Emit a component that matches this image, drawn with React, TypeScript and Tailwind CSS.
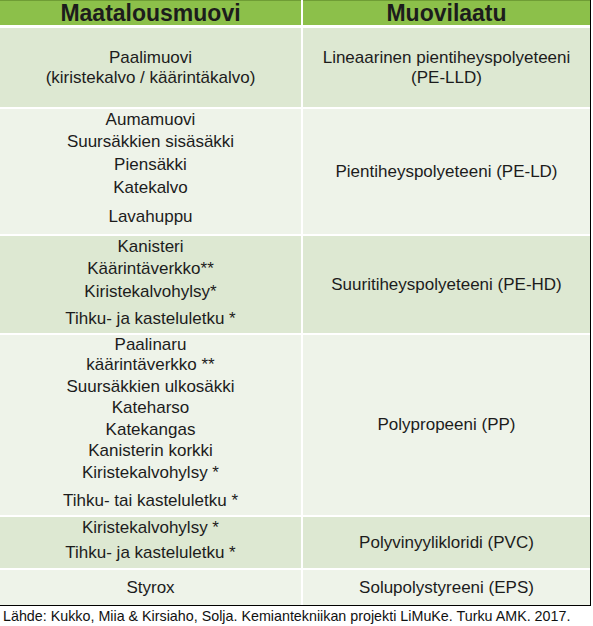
const font = { fontFamily: '"Liberation Sans", Arial, sans-serif' };

type Line = { text: string; cls?: string };

const Cell = ({ lines, cls }: { lines: Line[]; cls: string }) => (
  <div className={`flex flex-col items-center text-center ${cls}`}>
    {lines.map((l, i) => (
      <div key={i} className={l.cls ?? "leading-[22px]"}>
        {l.text}
      </div>
    ))}
  </div>
);

const App = () => {
  return (
    <div className="w-[593px] h-[626px] bg-white text-[#1c1c1c]" style={font}>
      <div className="w-[591px] border-r border-b border-black bg-white">
        <div className="grid grid-cols-[301px_287px] gap-x-[2px] gap-y-[2px]">
          {/* header */}
          <div className="h-[25px] bg-[#8cc04a] border-t border-[#6f9d35] flex items-center justify-center text-[23px] font-bold leading-none">
            Maatalousmuovi
          </div>
          <div className="h-[25px] bg-[#8cc04a] border-t border-[#6f9d35] flex items-center justify-center text-[23px] font-bold leading-none">
            Muovilaatu
          </div>

          {/* Paalimuovi */}
          <div className="h-[79px] bg-[#dde8d2] mt-[1px] flex flex-col items-center justify-center text-[17px] leading-[20px]">
            <div>Paalimuovi</div>
            <div>(kiristekalvo / käärintäkalvo)</div>
          </div>
          <div className="h-[79px] bg-[#dde8d2] mt-[1px] flex flex-col items-center justify-center text-[17px] leading-[20px]">
            <div>Lineaarinen pientiheyspolyeteeni</div>
            <div>(PE-LLD)</div>
          </div>

          {/* PE-LD */}
          <Cell
            cls="h-[125px] bg-[#eef3e9] text-[17px]"
            lines={[
              { text: "Aumamuovi", cls: "leading-[22px]" },
              { text: "Suursäkkien sisäsäkki", cls: "leading-[22px]" },
              { text: "Piensäkki", cls: "leading-[23px]" },
              { text: "Katekalvo", cls: "leading-[23px]" },
              { text: "Lavahuppu", cls: "leading-[23px] mt-[6px]" },
            ]}
          />
          <div className="h-[125px] bg-[#eef3e9] flex items-center justify-center text-[17px]">
            Pientiheyspolyeteeni (PE-LD)
          </div>

          {/* PE-HD */}
          <Cell
            cls="h-[97px] bg-[#dde8d2] text-[17px]"
            lines={[
              { text: "Kanisteri", cls: "leading-[21px]" },
              { text: "Käärintäverkko**", cls: "leading-[23px]" },
              { text: "Kiristekalvohylsy*", cls: "leading-[23px]" },
              { text: "Tihku- ja kasteluletku *", cls: "leading-[23px] mt-[4px]" },
            ]}
          />
          <div className="h-[97px] bg-[#dde8d2] flex items-center justify-center text-[17px]">
            Suuritiheyspolyeteeni (PE-HD)
          </div>

          {/* PP */}
          <Cell
            cls="h-[180px] bg-[#eef3e9] text-[17px]"
            lines={[
              { text: "Paalinaru", cls: "leading-[19px]" },
              { text: "käärintäverkko **", cls: "leading-[21.5px]" },
              { text: "Suursäkkien ulkosäkki", cls: "leading-[21.5px]" },
              { text: "Kateharso", cls: "leading-[21.5px]" },
              { text: "Katekangas", cls: "leading-[21.5px]" },
              { text: "Kanisterin korkki", cls: "leading-[21.5px]" },
              { text: "Kiristekalvohylsy *", cls: "leading-[21.5px]" },
              { text: "Tihku- tai kasteluletku *", cls: "leading-[21.5px] mt-[7px]" },
            ]}
          />
          <div className="h-[180px] bg-[#eef3e9] flex items-center justify-center text-[17px]">
            Polypropeeni (PP)
          </div>

          {/* PVC */}
          <Cell
            cls="h-[51px] bg-[#dde8d2] text-[17px]"
            lines={[
              { text: "Kiristekalvohylsy *", cls: "leading-[21px]" },
              { text: "Tihku- ja kasteluletku *", cls: "leading-[22px] mt-[4px]" },
            ]}
          />
          <div className="h-[51px] bg-[#dde8d2] flex items-center justify-center text-[17px]">
            Polyvinyylikloridi (PVC)
          </div>

          {/* EPS */}
          <div className="h-[35px] bg-[#eef3e9] flex items-center justify-center text-[17px]">
            Styrox
          </div>
          <div className="h-[35px] bg-[#eef3e9] flex items-center justify-center text-[17px]">
            Solupolystyreeni (EPS)
          </div>
        </div>
      </div>
      <div className="pl-[3px] pt-[1px] text-[14.3px] leading-[18px] text-[#111]">
        Lähde: Kukko, Miia &amp; Kirsiaho, Solja. Kemiantekniikan projekti LiMuKe. Turku AMK. 2017.
      </div>
    </div>
  );
};

export default App;
